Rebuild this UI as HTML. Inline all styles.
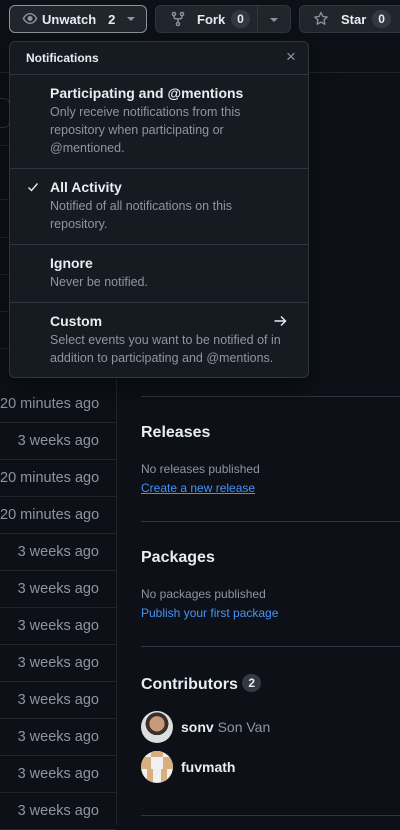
<!DOCTYPE html>
<html><head><style>
*{box-sizing:border-box;margin:0;padding:0}
body{width:400px;height:825px;background:#0d1117;font-family:"Liberation Sans",sans-serif;color:#e6edf3;position:relative;overflow:hidden}
.a{position:absolute}
.btn{position:absolute;top:5px;height:28px;border:1px solid #30363d;border-radius:6px;background:#21262d;font-size:13px;font-weight:bold;color:#e6edf3;display:flex;align-items:center}
.cnt{background:#343941;border-radius:10px;padding:2px 6px;font-size:12px;font-weight:bold;margin-left:6px}
.hl{position:absolute;height:1px;background:#21262d}
.row{position:absolute;left:0;width:116px;height:37px;border-bottom:1px solid #21262d;font-size:14.5px;color:#8d96a0;text-align:right;padding-right:17px;line-height:37px;white-space:nowrap}
.it{position:absolute;left:0;width:298px;border-top:1px solid #30363d;padding:8px 10px 0 40px;white-space:nowrap}
.it b{display:block;font-size:14px;color:#e6edf3;line-height:20px}
.it span{display:block;font-size:12.5px;color:#8d96a0;line-height:18px}
h3{position:absolute;left:141px;font-size:16px;font-weight:bold}
.sm{position:absolute;left:141px;font-size:12px;color:#8d96a0}
.lk{position:absolute;left:141px;font-size:12px;color:#4493f8}
</style></head><body>
<div class="hl" style="left:0;width:400px;top:72px"></div>
<div class="a" style="left:-10px;top:98px;width:20px;height:30px;border:1px solid #30363d;border-radius:6px"></div>
<div class="hl" style="left:0;width:116px;top:145px"></div>
<div class="hl" style="left:0;width:116px;top:199px"></div>
<div class="hl" style="left:0;width:116px;top:237px"></div>
<div class="hl" style="left:0;width:116px;top:274px"></div>
<div class="hl" style="left:0;width:116px;top:311px"></div>
<div class="hl" style="left:0;width:116px;top:348px"></div>
<div class="a" style="left:116px;top:72px;width:1px;height:753px;background:#21262d"></div>
<div class="row" style="top:386px">20 minutes ago</div>
<div class="row" style="top:423px">3 weeks ago</div>
<div class="row" style="top:460px">20 minutes ago</div>
<div class="row" style="top:497px">20 minutes ago</div>
<div class="row" style="top:534px">3 weeks ago</div>
<div class="row" style="top:571px">3 weeks ago</div>
<div class="row" style="top:608px">3 weeks ago</div>
<div class="row" style="top:645px">3 weeks ago</div>
<div class="row" style="top:682px">3 weeks ago</div>
<div class="row" style="top:719px">3 weeks ago</div>
<div class="row" style="top:756px">3 weeks ago</div>
<div class="row" style="top:793px">3 weeks ago</div>

<div class="hl" style="left:141px;width:259px;top:396px;background:#30363d"></div>
<h3 style="top:424px">Releases</h3>
<div class="sm" style="top:462px">No releases published</div>
<div class="lk" style="top:481px;text-decoration:underline">Create a new release</div>
<div class="hl" style="left:141px;width:259px;top:521px;background:#30363d"></div>
<h3 style="top:549px">Packages</h3>
<div class="sm" style="top:587px">No packages published</div>
<div class="lk" style="top:606px">Publish your first package</div>
<div class="hl" style="left:141px;width:259px;top:646px;background:#30363d"></div>
<h3 style="top:674px">Contributors <span style="display:inline-block;background:#343941;border-radius:10px;font-size:12px;padding:2px 6px;vertical-align:2px">2</span></h3>
<div class="a" style="left:141px;top:711px;width:32px;height:32px;border-radius:50%;background:radial-gradient(circle at 50% 40%,#c89a7c 0 30%,#3a2f2a 31% 45%,#ddd 46%)"></div>
<div class="a" style="left:181px;top:719px;font-size:14px"><b>sonv</b> <span style="color:#8d96a0">Son Van</span></div>
<div class="a" style="left:141px;top:751px;width:32px;height:32px;border-radius:50%;overflow:hidden;background:#f0f0f0">
<div class="a" style="left:10px;top:0;width:12px;height:6px;background:#d8b080"></div>
<div class="a" style="left:0;top:6px;width:10px;height:12px;background:#d8b080"></div>
<div class="a" style="left:22px;top:6px;width:10px;height:12px;background:#d8b080"></div>
<div class="a" style="left:6px;top:18px;width:6px;height:14px;background:#d8b080"></div>
<div class="a" style="left:20px;top:18px;width:6px;height:14px;background:#d8b080"></div>
</div>
<div class="a" style="left:181px;top:759px;font-size:14px;font-weight:bold">fuvmath</div>
<div class="hl" style="left:141px;width:259px;top:815px;background:#30363d"></div>

<div class="btn" style="left:9px;width:138px;border-color:#8b949e;padding-left:12px">
<svg width="16" height="16" viewBox="0 0 16 16" fill="#8d96a0"><path d="M8 2c1.98 0 3.6.9 4.8 1.950C14 5 14.8 6.3 15.2 7.2c.1.25.1.35 0 .6C14.8 8.7 14 10 12.8 11.05 11.6 12.1 9.98 13 8 13s-3.6-.9-4.8-1.95C2 10 1.2 8.7.8 7.8a.7.7 0 010-.6C1.2 6.3 2 5 3.2 3.95 4.4 2.9 6.02 2 8 2zM2.3 7.5c.4.8 1.050 1.8 2 2.6C5.3 11 6.5 11.6 8 11.6s2.7-.6 3.7-1.5c.95-.8 1.6-1.8 2-2.6-.4-.8-1.05-1.8-2-2.6C10.7 4 9.5 3.4 8 3.4S5.3 4 4.3 4.9c-.95.8-1.6 1.8-2 2.6zM8 10a2.5 2.5 0 110-5 2.5 2.5 0 010 5z"/></svg>
<span style="margin-left:4px">Unwatch</span><span style="margin-left:12px">2</span>
<span style="margin-left:12px;border-left:4px solid transparent;border-right:4px solid transparent;border-top:4px solid #8d96a0"></span></div>
<div class="btn" style="left:155px;width:136px;padding-left:14px">
<svg width="16" height="16" viewBox="0 0 16 16" fill="none" stroke="#8d96a0" stroke-width="1.4"><circle cx="4" cy="3" r="1.6"/><circle cx="12" cy="3" r="1.6"/><circle cx="8" cy="13" r="1.6"/><path d="M4 4.6v1.4c0 1 .8 1.8 1.8 1.8h4.4c1 0 1.8-.8 1.8-1.8V4.6M8 7.8v3.6"/></svg>
<span style="margin-left:11px">Fork</span><span class="cnt">0</span>
<span style="position:absolute;left:101px;top:0;bottom:0;border-left:1px solid #30363d"></span>
<span style="position:absolute;left:114px;top:12px;border-left:4px solid transparent;border-right:4px solid transparent;border-top:4px solid #8d96a0"></span></div>
<div class="btn" style="left:299px;width:120px;padding-left:13px">
<svg width="16" height="16" viewBox="0 0 16 16" fill="none" stroke="#8d96a0" stroke-width="1.3" stroke-linejoin="round"><path d="M8 1.5l1.9 4 4.3.5-3.2 3 .9 4.3L8 11.1l-3.9 2.2.9-4.3-3.2-3 4.3-.5z"/></svg>
<span style="margin-left:12px">Star</span><span class="cnt">0</span></div>

<div class="a" style="left:9px;top:41px;width:300px;height:337px;background:#161b22;border:1px solid #30363d;border-radius:6px;box-shadow:0 8px 24px rgba(0,0,0,.5);overflow:hidden">
<div class="a" style="left:16px;top:9px;font-size:12px;font-weight:bold">Notifications</div>
<div class="a" style="left:276px;top:5px;font-size:17px;color:#8d96a0">×</div>
<div class="it" style="top:32px;height:94px"><b>Participating and @mentions</b><span>Only receive notifications from this<br>repository when participating or<br>@mentioned.</span></div>
<div class="it" style="top:126px;height:76px"><b>All Activity</b><span>Notified of all notifications on this<br>repository.</span>
<svg class="a" style="left:17px;top:12px" width="12" height="12" viewBox="0 0 12 12" fill="none" stroke="#e6edf3" stroke-width="1.4"><path d="M1.5 6.5l3 3 6-7"/></svg></div>
<div class="it" style="top:202px;height:58px"><b>Ignore</b><span>Never be notified.</span></div>
<div class="it" style="top:260px;height:80px"><b>Custom</b><span>Select events you want to be notified of in<br>addition to participating and @mentions.</span>
<svg class="a" style="left:263px;top:11px" width="14" height="14" viewBox="0 0 14 14" fill="none" stroke="#e6edf3" stroke-width="1.4"><path d="M1.5 7h11M8 2.5L12.5 7 8 11.5"/></svg></div>
</div>
</body></html>
